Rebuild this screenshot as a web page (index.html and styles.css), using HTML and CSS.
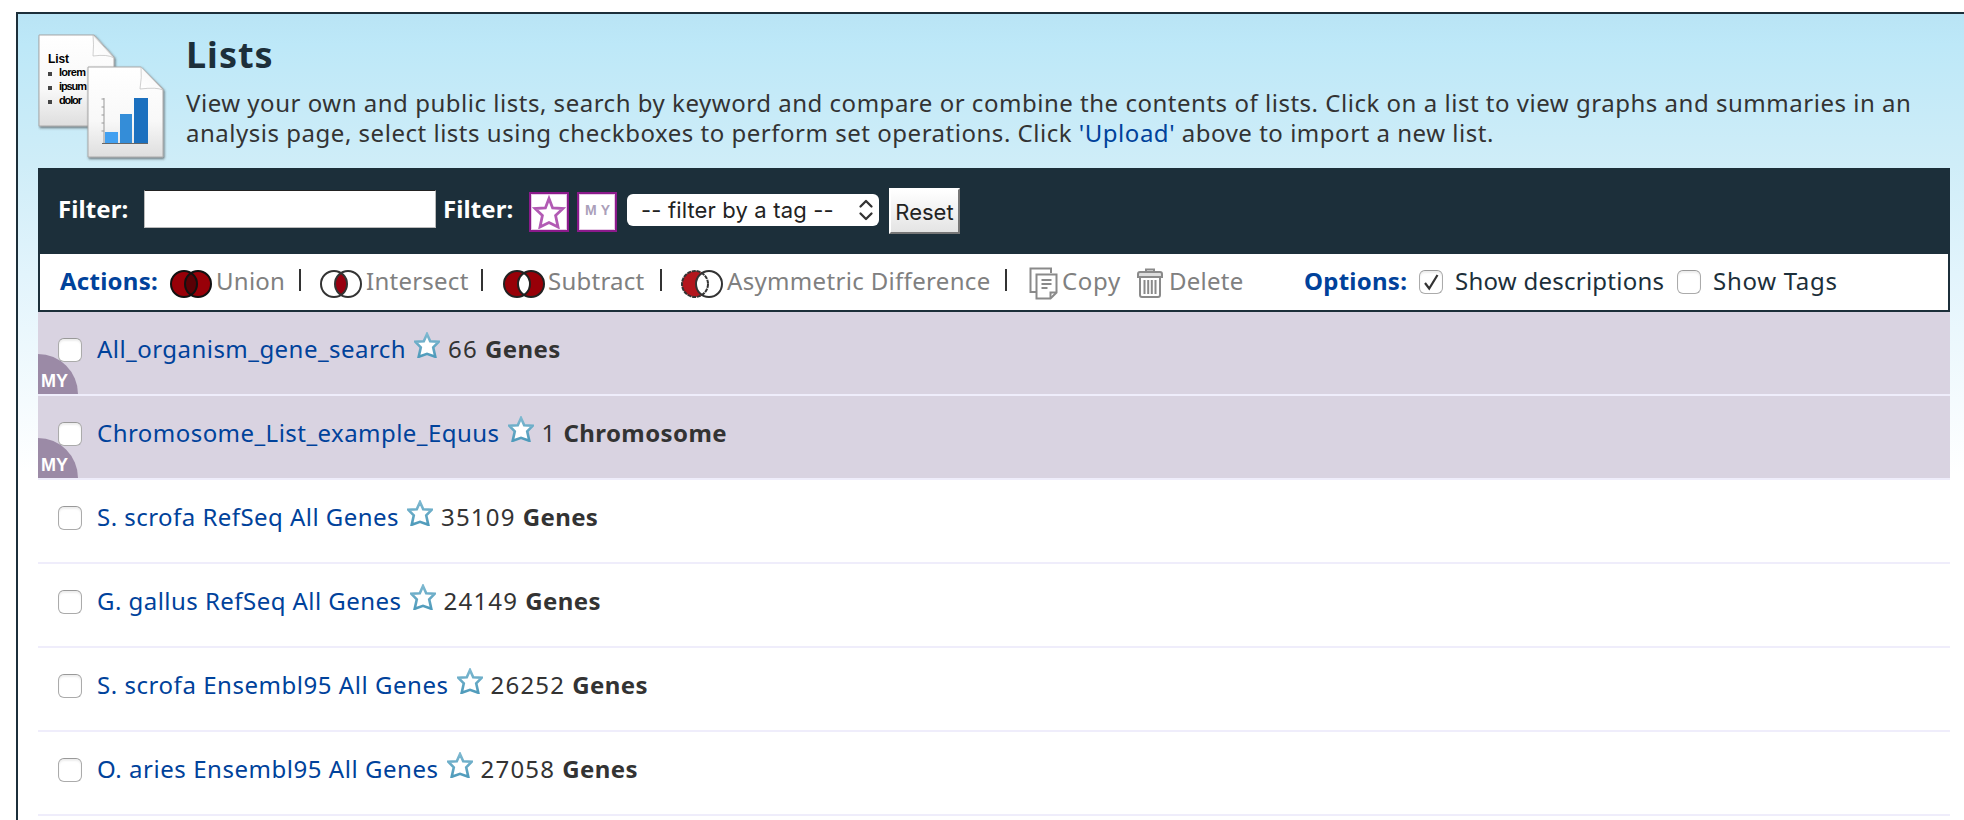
FILE: index.html
```html
<!DOCTYPE html>
<html lang="en">
<head>
<meta charset="utf-8">
<title>Lists</title>
<link rel="stylesheet" href="styles.css">
</head>
<body>
<svg class="defs" width="0" height="0" aria-hidden="true">
  <defs>
    <linearGradient id="paper" x1="0" y1="0" x2="0" y2="1"><stop offset="0" stop-color="#fff"/><stop offset=".6" stop-color="#f8f8f8"/><stop offset="1" stop-color="#dedede"/></linearGradient>
    <linearGradient id="fold" x1="0" y1="1" x2="1" y2="0"><stop offset="0" stop-color="#fff"/><stop offset=".5" stop-color="#fafafa"/><stop offset="1" stop-color="#bbb"/></linearGradient>
    <linearGradient id="starline" x1="0" y1="0" x2="0" y2="1"><stop offset="0" stop-color="#7db8d0"/><stop offset="1" stop-color="#4f9bbb"/></linearGradient>
    <filter id="shade" x="-10%" y="-10%" width="125%" height="125%"><feDropShadow dx="1" dy="1.5" stdDeviation="1" flood-color="#333" flood-opacity=".65"/></filter>
    <clipPath id="lens"><circle cx="14" cy="14" r="13"/></clipPath>
  </defs>
  <symbol id="star" viewBox="0 0 26 26"><path d="M13 2 16.200 9.200 24.600 9.800 19.200 15.400 21.300 24.800 13 21.800 4.700 24.800 6.800 15.400 1.400 9.800 9.800 9.200Z" fill="#fff" stroke="url(#starline)" stroke-width="2.600"/></symbol>
</svg>
<main class="panel">
  <header class="intro">
    <svg class="logo" width="130" height="130" viewBox="0 0 130 130">
      <g filter="url(#shade)"><path d="M1 1H56L76 23V92H1Z" fill="url(#paper)" stroke="#aaa"/><path d="M55 1 76 24Q70 20 55 22Q56 10 55 1Z" fill="url(#fold)" stroke="#bbb" stroke-width=".7"/></g>
      <text class="logo-title" x="10" y="29" textLength="21">List</text>
      <text class="logo-line" x="21" y="42" textLength="27">lorem</text>
      <text class="logo-line" x="21" y="56" textLength="28">ipsum</text>
      <text class="logo-line" x="21" y="70" textLength="23">dolor</text>
      <path d="M10 38h4v4h-4zM10 52h4v4h-4zM10 66h4v4h-4z" fill="#444"/>
      <g filter="url(#shade)"><path d="M50 33H103L125 55V123H50Z" fill="url(#paper)" stroke="#aaa"/><path d="M103 33 125 56Q119 53 102 55Q104 43 103 33Z" fill="url(#fold)" stroke="#bbb" stroke-width=".7"/></g>
      <path d="M66 64V109" stroke="#999"/><path d="M63.500 65H66M63.500 73H66M63.500 81H66M63.500 89H66M63.500 97H66" stroke="#999"/>
      <path d="M67 98h13v11H67z" fill="#42a0f0"/><path d="M82 80h12v29H82z" fill="#348dd8"/><path d="M96 64h14v45H96z" fill="#1b70bf"/>
      <path d="M64 109.500H110" stroke="#666"/>
    </svg>
    <div class="intro-text">
      <h1>Lists</h1>
      <p><span class="line">View your own and public lists, search by keyword and compare or combine the contents of lists. Click on a list to view graphs and summaries in an</span>
      <span class="line">analysis page, select lists using checkboxes to perform set operations. Click <a href="#">'Upload'</a> above to import a new list.</span></p>
    </div>
  </header>

  <form class="filters">
    <label class="flabel" for="q">Filter:</label>
    <input id="q" class="query" type="text">
    <span class="flabel">Filter:</span>
    <span class="toggle"><svg width="34" height="34" viewBox="0 0 34 34"><path d="M17 3.500 20.600 13 31 13.500 23.600 20.500 26 32 17 27.500 8 32 10.400 20.500 3 13.500 13.400 13Z" fill="none" stroke="#b25ab4" stroke-width="2.800"/></svg></span>
    <span class="toggle my">MY</span>
    <span class="select"><span>-- filter by a tag --</span><svg width="16" height="22" viewBox="0 0 16 22"><path d="M2.500 7.500 8 2 13.500 7.500M2.500 14.500 8 20 13.500 14.500" fill="none" stroke="#333" stroke-width="2.300" stroke-linecap="round" stroke-linejoin="round"/></svg></span>
    <span class="reset">Reset</span>
  </form>

  <div class="actions">
    <b class="blue">Actions:</b>
    <svg class="venn" viewBox="0 0 42 28"><g fill="#980008"><circle cx="14" cy="14" r="13"/><circle cx="28" cy="14" r="13"/></g><circle cx="28" cy="14" r="13" fill="#590005" clip-path="url(#lens)"/><g fill="none" stroke="#111" stroke-width="2"><circle cx="14" cy="14" r="13"/><circle cx="28" cy="14" r="13"/></g></svg>
    <span class="act">Union</span><i class="bar"></i>
    <svg class="venn" viewBox="0 0 42 28"><circle cx="28" cy="14" r="13" fill="#980010" clip-path="url(#lens)"/><g fill="none" stroke="#333" stroke-width="2"><circle cx="14" cy="14" r="13"/><circle cx="28" cy="14" r="13"/></g></svg>
    <span class="act">Intersect</span><i class="bar"></i>
    <svg class="venn" viewBox="0 0 42 28"><g fill="#980008"><circle cx="14" cy="14" r="13"/><circle cx="28" cy="14" r="13"/></g><circle cx="28" cy="14" r="13" fill="#fff" clip-path="url(#lens)"/><g fill="none" stroke="#222" stroke-width="2"><circle cx="14" cy="14" r="13"/><circle cx="28" cy="14" r="13"/></g></svg>
    <span class="act">Subtract</span><i class="bar"></i>
    <svg class="venn" viewBox="0 0 42 28"><circle cx="14" cy="14" r="13" fill="#b3161d"/><circle cx="28" cy="14" r="13" fill="#fff"/><g fill="none" stroke="#333" stroke-width="2"><circle cx="14" cy="14" r="13" stroke-dasharray="4 .8"/><circle cx="28" cy="14" r="13"/></g></svg>
    <span class="act asym">Asymmetric Difference</span><i class="bar"></i>
    <svg class="copy" width="29" height="33" viewBox="0 0 29 33" fill="none" stroke="#8a8a8a" stroke-width="2"><path d="M7 25H1.500V1.500H22V6"/><path d="M7.500 7.500H27.500V25.500L21.500 31.500H7.500Z" fill="#fff"/><path d="M27 25.500H21.500V31M12.500 13H22.500M12.500 17H22.500M12.500 21H18.500"/></svg>
    <span class="act wide">Copy</span>
    <svg class="trash" width="26" height="30" viewBox="0 0 26 30" fill="none" stroke="#8a8a8a" stroke-width="2"><path d="M9 4V1.500H17V4"/><path d="M1 9V6Q1 4 3 4H23Q25 4 25 6V9Z" fill="#ddd"/><path d="M3 10V27Q3 29 5 29H21Q23 29 23 27V10M7.500 12V26M11.200 12V26M14.800 12V26M18.500 12V26"/></svg>
    <span class="act">Delete</span>
    <b class="blue opt">Options:</b>
    <span class="check on"><svg width="20" height="20" viewBox="0 0 20 20"><path d="M4 11 8.200 16.500 16.500 3" fill="none" stroke="#333" stroke-width="2.200"/></svg></span>
    <span class="show">Show descriptions</span>
    <span class="check"></span>
    <span class="show wide">Show Tags</span>
  </div>

  <ul class="lists">
    <li class="row mine"><span class="corner">MY</span><span class="check"></span><a class="name" href="#">All_organism_gene_search</a><svg class="star"><use href="#star"/></svg><span class="count">66</span><b>Genes</b></li>
    <li class="row mine"><span class="corner">MY</span><span class="check"></span><a class="name" href="#">Chromosome_List_example_Equus</a><svg class="star"><use href="#star"/></svg><span class="count">1</span><b>Chromosome</b></li>
    <li class="row"><span class="check"></span><a class="name" href="#">S. scrofa RefSeq All Genes</a><svg class="star"><use href="#star"/></svg><span class="count">35109</span><b>Genes</b></li>
    <li class="row"><span class="check"></span><a class="name" href="#">G. gallus RefSeq All Genes</a><svg class="star"><use href="#star"/></svg><span class="count">24149</span><b>Genes</b></li>
    <li class="row"><span class="check"></span><a class="name ens" href="#">S. scrofa Ensembl95 All Genes</a><svg class="star"><use href="#star"/></svg><span class="count">26252</span><b>Genes</b></li>
    <li class="row"><span class="check"></span><a class="name ens" href="#">O. aries Ensembl95 All Genes</a><svg class="star"><use href="#star"/></svg><span class="count">27058</span><b>Genes</b></li>
  </ul>
</main>
</body>
</html>
```
FILE: styles.css
```css
* { box-sizing: border-box; }
html, body { height: 100%; }
body { margin: 0; padding: 12px 0 0 16px; background: #fff; color: #333; font: 24px/30px "Noto Sans", "Open Sans", sans-serif; letter-spacing: .52px; overflow: hidden; }
a { color: #00429b; text-decoration: none; }
.defs { position: absolute; }

.panel { width: 1948px; height: 830px; padding: 20px 14px 0 20px; border: 2px solid #1c2f3a; border-width: 2px 0 0 2px; background: linear-gradient(#b9e4f5, #bde8f8 30px, #cfedf8 150px, #e2f4fc 260px, #fff 460px); }

.intro { display: flex; height: 134px; }
.logo { flex: none; width: 130px; height: 130px; }
.logo-title { font: bold 12px "Liberation Sans", sans-serif; letter-spacing: 0; }
.logo-line { font: bold 11px "Liberation Sans", sans-serif; letter-spacing: 0; }
.intro-text { margin-left: 18px; white-space: nowrap; }
h1 { margin: 0; padding-top: 1px; height: 54px; color: #1c2f3a; font-size: 36px; line-height: 40px; letter-spacing: 1px; }
p { margin: 0; }
.line { display: block; }

.filters { display: grid; grid-template-columns: 86px 292px 93px 48px 50px 262px 71px; padding: 20px 0 0 20px; height: 86px; margin: 0; background: #1c2f3a; }
.filters > * { align-self: start; }
.flabel { color: #fff; font-weight: bold; margin-top: 6px; letter-spacing: .1px; }
.query { margin: 2px 0 0; width: 292px; height: 38px; border: 1px solid #bbb; border-top-color: #222; background: #fff; }
.query + .flabel { margin-left: 7px; }
.toggle { display: flex; align-items: center; justify-content: center; width: 40px; height: 40px; margin-top: 4px; border: 2px solid #8b1a8b; background: #fff; box-shadow: inset 0 0 0 1px #e6cbe6; }
.my { padding: 0 0 4px 5px; color: #ab9fba; font: bold 14px "Liberation Sans", sans-serif; letter-spacing: 4px; }
.select { display: flex; align-items: center; justify-content: space-between; width: 252px; height: 32px; margin-top: 6px; padding: 0 5px 0 14px; border-radius: 6px; background: #fff; color: #222; font: 22px Inter, sans-serif; letter-spacing: .15px; white-space: nowrap; }
.reset { width: 71px; height: 46px; border: 2px solid #fff; border-right-color: #777; border-bottom-color: #777; background: linear-gradient(#fff, #e4e4e4); color: #222; font: 22px/44px Inter, sans-serif; letter-spacing: 0; text-align: center; }

.actions { display: grid; grid-template-columns: 110px 46px 83px 21px 46px 115px 22px 45px 112px 21px 46px 278px 24px 33px 75px 32px 135px 115px 36px 222px 36px 130px; height: 58px; padding-left: 20px; border: 2px solid #1c2f3a; border-top: 0; background: #fff; }
.actions > * { white-space: nowrap; }
.actions b, .act, .show { margin-top: 12px; letter-spacing: .25px; }
.actions .asym { letter-spacing: .33px; }
.actions .wide { letter-spacing: .7px; }
.blue { color: #00429b; }
.act { color: #808080; }
.show { color: #1c2f3a; }
.venn { width: 42px; height: 28px; margin-top: 16px; }
.bar { width: 2px; height: 22px; margin-top: 15px; background: #333; }
.copy { margin-top: 13px; }
.trash { margin-top: 14px; }
.check { flex: none; display: flex; align-items: center; justify-content: center; width: 24px; height: 24px; border: 1.500px solid #ababab; border-top-color: #999; border-radius: 6px; background: #fff; box-shadow: inset 0 2px 2px #eee; }
.actions .check { margin-top: 16px; }

.lists { margin: 0; padding: 0; list-style: none; }
.row { position: relative; display: flex; height: 84px; padding: 22px 0 0 20px; border-bottom: 2px solid #efedfb; background: #fff; white-space: nowrap; }
.mine { background: #d9d3e1; }
.row .check { position: relative; margin-top: 4px; }
.name { margin-left: 15px; letter-spacing: .46px; }
.ens { letter-spacing: .54px; }
.star { width: 26px; height: 26px; margin: -2px 8px 0 8px; }
.count { letter-spacing: 1.200px; }
.row b { margin-left: 7px; letter-spacing: .4px; }
.corner { position: absolute; left: 0; bottom: 0; width: 40px; height: 40px; padding: 18px 0 0 3px; border-top-right-radius: 40px; background: #9b8aa6; color: #fff; font: bold 18px/18px "Liberation Sans", sans-serif; letter-spacing: 0; }
```
